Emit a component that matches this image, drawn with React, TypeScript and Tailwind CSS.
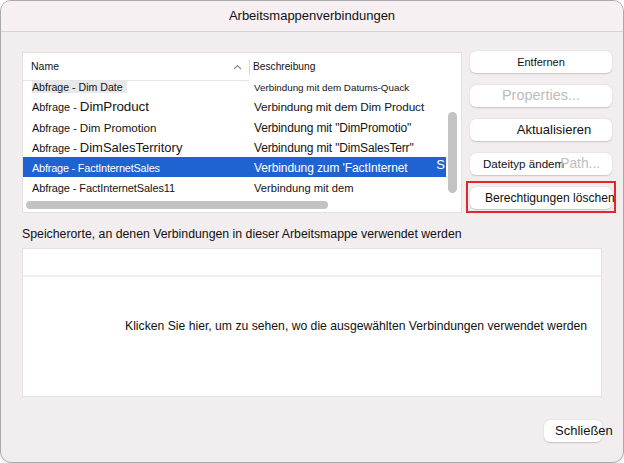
import React from "react";

const font = { fontFamily: '"Liberation Sans", Arial, sans-serif' };

function Row({
  h,
  name,
  desc,
  selected,
  extra,
}: {
  h: string;
  name: React.ReactNode;
  desc: React.ReactNode;
  selected?: boolean;
  extra?: React.ReactNode;
}) {
  return (
    <div
      className={`flex w-[423px] ${h} whitespace-nowrap ${
        selected ? "bg-[#1f63d2] text-white" : "text-[#141414]"
      }`}
    >
      <div className="w-[226px] shrink-0 overflow-hidden pl-[9px]">{name}</div>
      <div className="flex w-[197px] shrink-0 justify-between overflow-hidden pl-[5px] pr-[1px]">
        <span>{desc}</span>
        {extra}
      </div>
    </div>
  );
}

function Btn({
  children,
  className = "",
}: {
  children: React.ReactNode;
  className?: string;
}) {
  return (
    <div
      className={`relative flex h-[22px] w-[142px] items-center whitespace-nowrap rounded-[6px] bg-white shadow-[0_0.5px_1.5px_rgba(0,0,0,0.18)] ${className}`}
    >
      {children}
    </div>
  );
}

export default function App() {
  return (
    <div style={font} className="h-[463px] w-[624px] bg-white">
      <div className="flex h-[463px] w-[624px] flex-col overflow-hidden rounded-[11px] border border-[#a9a9a9] bg-[#f2edef]">
        {/* Title bar */}
        <div className="flex h-[31px] shrink-0 items-center justify-center border-b border-[#d9d2d5] bg-[#f7f0f3] text-[13px] text-[#111]">
          Arbeitsmappenverbindungen
        </div>

        <div className="flex flex-col pl-[21px] pt-[20px]">
          {/* top section */}
          <div className="flex">
            {/* list */}
            <div className="relative h-[161px] w-[440px] shrink-0 overflow-hidden border border-[#e4e0e2] bg-white">
              {/* header */}
              <div className="flex h-[28px] items-center text-[10.5px] text-[#111]">
                <div className="flex h-[28px] w-[226px] shrink-0 items-center border-b border-[#e6e6e6] pl-[8px]">
                  <span>Name</span>
                  <svg
                    className="ml-auto mr-[7px]"
                    width="9"
                    height="6"
                    viewBox="0 0 9 6"
                  >
                    <polyline
                      points="1,5 4.5,1.5 8,5"
                      fill="none"
                      stroke="#8a8a8a"
                      strokeWidth="1.1"
                    />
                  </svg>
                </div>
                <div className="h-[15px] w-px bg-[#d8d8d8]" />
                <div className="pl-[3px] text-[10.2px]">Beschreibung</div>
              </div>

              {/* rows */}
              <Row
                h="h-[15px] items-start text-[10.6px] leading-[12px]"
                name={
                  <span className="bg-[#e8e8e8] pr-[4px] pb-[2px]">Abfrage - Dim Date</span>
                }
                desc={<span className="text-[9.8px]">Verbindung mit dem Datums-Quack</span>}
              />
              <Row
                h="h-[20px] items-center"
                name={
                  <span>
                    <span className="text-[10.9px]">Abfrage - </span>
                    <span className="text-[13.4px] tracking-[-0.1px]">DimProduct</span>
                  </span>
                }
                desc={
                  <span className="text-[11.8px] tracking-[-0.1px]">
                    Verbindung mit dem Dim Product
                  </span>
                }
              />
              <Row
                h="h-[21px] items-center pt-[1px]"
                name={
                  <span>
                    <span className="text-[10.9px]">Abfrage - </span>
                    <span className="text-[11.6px]">Dim Promotion</span>
                  </span>
                }
                desc={
                  <span className="text-[12px] tracking-[-0.15px]">
                    Verbindung mit "DimPromotio"
                  </span>
                }
              />
              <Row
                h="h-[20px] items-center"
                name={
                  <span>
                    <span className="text-[10.9px]">Abfrage - </span>
                    <span className="text-[13px]">DimSalesTerritory</span>
                  </span>
                }
                desc={
                  <span className="text-[12px] tracking-[-0.15px]">
                    Verbindung mit "DimSalesTerr"
                  </span>
                }
              />
              <Row
                selected
                h="h-[20px] items-center"
                name={
                  <span className="text-[10.9px] tracking-[-0.2px]">
                    Abfrage - FactInternetSales
                  </span>
                }
                desc={
                  <span className="text-[12px] tracking-[-0.1px]">
                    Verbindung zum 'FactInternet
                  </span>
                }
                extra={<span className="text-[13px]">S</span>}
              />
              <Row
                h="h-[19px] items-center"
                name={
                  <span className="text-[11px] tracking-[-0.1px]">
                    Abfrage - FactInternetSales11
                  </span>
                }
                desc={<span className="text-[11.2px]">Verbindung mit dem</span>}
              />

              {/* horizontal scrollbar */}
              <div className="ml-[3px] mt-[5px] h-[8px] w-[302px] rounded-full bg-[#c3c3c3]" />

              {/* vertical scrollbar */}
              <div className="absolute left-[425px] top-[59px] h-[81px] w-[9px] rounded-full bg-[#c3c3c3]" />
            </div>

            {/* buttons */}
            <div className="ml-[8px] mt-[-1px] flex flex-col gap-[12px]">
              <Btn className="justify-center text-[11px] text-[#111]">Entfernen</Btn>
              <Btn className="justify-center text-[14.5px] text-[#bdbdbd]">
                Properties...
              </Btn>
              <Btn className="justify-center pl-[26px] text-[13px] text-[#111]">
                Aktualisieren
              </Btn>
              <Btn className="pl-[13px] text-[#111]">
                <span className="text-[11.6px]">Dateityp ändem</span>
                <span className="ml-[-4px] text-[13.8px] text-[#bdbdbd]">Path...</span>
              </Btn>
              <Btn className="overflow-visible pl-[15px] text-[12.1px] text-[#111]">
                <span>Berechtigungen löschen</span>
                <div className="pointer-events-none absolute bottom-[-4px] left-[-4px] right-[-4px] top-[-6px] border-2 border-[#e4262a]" />
              </Btn>
            </div>
          </div>

          {/* label */}
          <div className="mt-[14px] h-[14px] whitespace-nowrap text-[12.3px] leading-[14px] text-[#111]">
            Speicherorte, an denen Verbindungen in dieser Arbeitsmappe verwendet werden
          </div>

          {/* lower box */}
          <div className="mt-[7px] flex h-[149px] w-[580px] flex-col border border-[#e6e2e4] bg-white">
            <div className="h-[28px] border-b-2 border-[#efefef]" />
            <div className="flex flex-1 items-start whitespace-nowrap pl-[102px] pt-[40px] text-[12.2px] text-[#111]">
              Klicken Sie hier, um zu sehen, wo die ausgewählten Verbindungen verwendet werden
            </div>
          </div>

          {/* close */}
          <div className="mt-[23px] flex w-[580px] justify-end">
            <div className="flex h-[22px] w-[58px] items-center overflow-visible whitespace-nowrap rounded-[6px] bg-white pl-[11px] text-[13px] text-[#111] shadow-[0_0.5px_1.5px_rgba(0,0,0,0.18)]">
              Schließen
            </div>
          </div>
        </div>
      </div>
    </div>
  );
}
